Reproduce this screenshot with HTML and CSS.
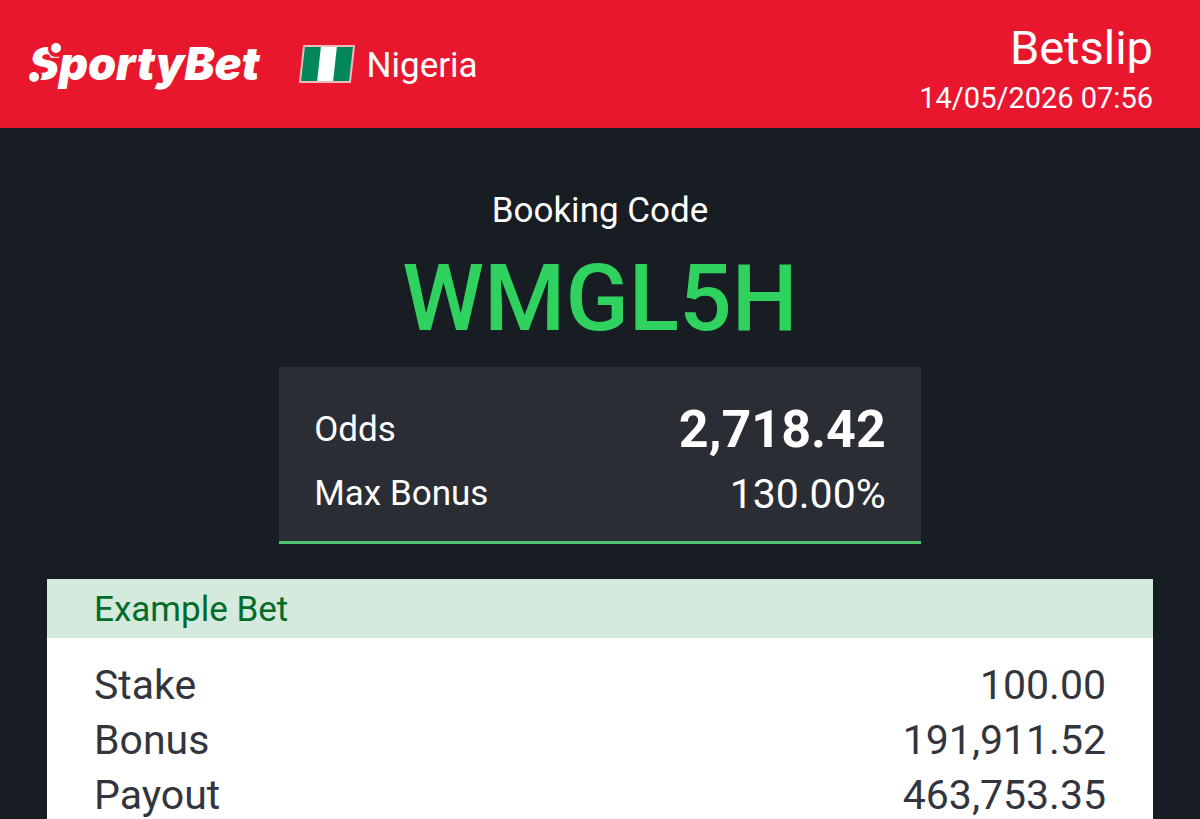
FILE: index.html
```html
<!DOCTYPE html>
<html lang="en">
<head>
    <meta charset="UTF-8">
    <meta name="viewport" content="width=device-width, initial-scale=1.0">
    <title>SportyBet Betslip</title>
    <link rel="stylesheet" href="styles.css">
</head>
<body>
    <header class="header">
        <div class="brand">
            <div class="logo">SportyBet
                <svg class="logo-dots" viewBox="0 0 34 44" aria-hidden="true">
                    <circle cx="27" cy="8" r="8" fill="#e9172d"/>
                    <circle cx="5" cy="34" r="8" fill="#e9172d"/>
                    <circle cx="27" cy="7" r="5" fill="#fff"/>
                    <circle cx="5" cy="36" r="5" fill="#fff"/>
                </svg>
            </div>
            <div class="country">
                <svg class="flag" viewBox="0 0 56 38" role="img" aria-label="Nigeria flag">
                    <path d="M5 1H55L51 37H1Z" fill="#fff"/>
                    <path d="M5 1H22L18 37H1Z" fill="#00875a"/>
                    <path d="M38 1H55L51 37H34Z" fill="#00875a"/>
                    <path d="M5 1H55L51 37H1Z" fill="none" stroke="#f0b9bd" stroke-width="2"/>
                </svg>
                <span>Nigeria</span>
            </div>
        </div>
        <div class="slip-info">
            <h1>Betslip</h1>
            <time datetime="2026-05-14T07:56">14/05/2026 07:56</time>
        </div>
    </header>

    <main>
        <section class="booking">
            <h2>Booking Code</h2>
            <p class="code">WMGL5H</p>
            <dl class="summary">
                <div class="row">
                    <dt>Odds</dt>
                    <dd class="odds">2,718.42</dd>
                </div>
                <div class="row">
                    <dt>Max Bonus</dt>
                    <dd>130.00%</dd>
                </div>
            </dl>
        </section>

        <section class="example">
            <h2>Example Bet</h2>
            <dl class="bet">
                <div class="row">
                    <dt>Stake</dt>
                    <dd>100.00</dd>
                </div>
                <div class="row">
                    <dt>Bonus</dt>
                    <dd>191,911.52</dd>
                </div>
                <div class="row">
                    <dt>Payout</dt>
                    <dd>463,753.35</dd>
                </div>
            </dl>
        </section>
    </main>
</body>
</html>
```
FILE: styles.css
```css
* {
    box-sizing: border-box;
}
body {
    font-family: Roboto, Arial, sans-serif;
    margin: 0;
    background-color: #181c23;
    color: #fff;
}
h1, h2, p, dl, dd {
    margin: 0;
    font-weight: 400;
}
.header {
    display: flex;
    justify-content: space-between;
    align-items: center;
    height: 128px;
    padding: 0 47px 0 29px;
    background-color: #e9172d;
}
.brand {
    display: flex;
    align-items: center;
    gap: 39px;
}
.logo {
    position: relative;
    font-family: Inter, sans-serif;
    font-size: 45px;
    line-height: 56px;
    font-weight: 900;
    font-style: italic;
}
.logo-dots {
    position: absolute;
    top: 5px;
    left: 0;
    width: 34px;
    height: 44px;
}
.country {
    display: flex;
    align-items: center;
    gap: 12px;
    font-size: 35px;
    line-height: 40px;
}
.country span {
    padding-top: 4px;
}
.flag {
    width: 56px;
    height: 38px;
}
.slip-info {
    padding-top: 7px;
    text-align: right;
}
.slip-info h1 {
    font-size: 47px;
    line-height: 60px;
}
.slip-info time {
    display: block;
    font-size: 29px;
    line-height: 40px;
}
.booking {
    display: flex;
    flex-direction: column;
    align-items: center;
    padding: 60px 47px 35px;
}
.booking h2 {
    font-size: 35px;
    line-height: 46px;
}
.code {
    margin-top: 9px;
    color: #2fd15f;
    font-size: 93px;
    line-height: 112px;
    font-weight: 500;
}
.row {
    display: flex;
    justify-content: space-between;
    align-items: center;
}
.summary {
    width: 58%;
    margin-top: 12px;
    padding: 31px 35px 15px;
    background-color: #2a2d34;
    border-bottom: 3px solid #4fc36f;
    font-size: 35px;
    line-height: 64px;
}
.summary dd {
    font-size: 41px;
}
.summary .odds {
    font-size: 52px;
    font-weight: 700;
}
.example {
    margin: 0 47px;
    background-color: #fff;
    color: #33353e;
}
.example h2 {
    padding: 3px 47px 0;
    background-color: #d4eadd;
    color: #046b2a;
    font-size: 35px;
    line-height: 56px;
}
.bet {
    padding: 20px 47px 0;
    font-size: 41px;
    line-height: 55px;
}
```
